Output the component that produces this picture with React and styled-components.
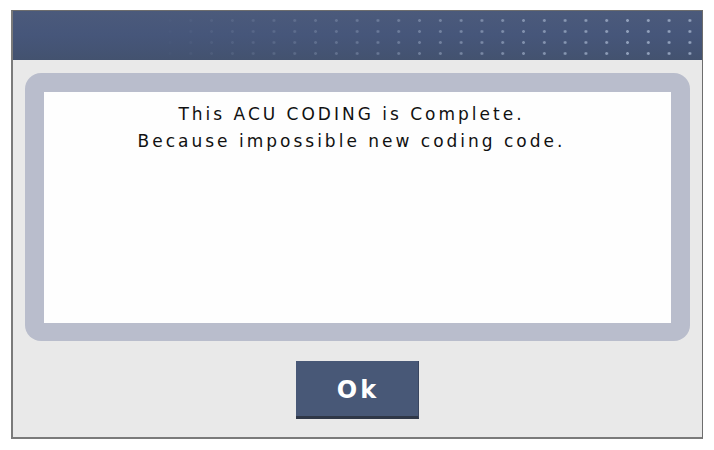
import React from "react";
import styled, { createGlobalStyle } from "styled-components";

const GlobalStyle = createGlobalStyle`
  html, body {
    margin: 0;
    padding: 0;
    background: #ffffff;
  }
`;

const Frame = styled.div`
  box-sizing: border-box;
  display: flex;
  flex-direction: column;
  width: 692px;
  height: 429px;
  margin: 10px 0 0 11px;
  background: #e9e9e9;
  border-top: 1px solid #6d6d6d;
  border-left: 2px solid #7a7a7a;
  border-right: 1px solid #6d6d6d;
  border-bottom: 2px solid #7a7a7a;
  font-family: "DejaVu Sans", "Liberation Sans", sans-serif;
`;

const Header = styled.div`
  position: relative;
  height: 49px;
  flex-shrink: 0;
  background: linear-gradient(180deg, #4b5a7b 0%, #46567a 50%, #43526f 100%);

  &::after {
    content: "";
    position: absolute;
    inset: 0;
    background-image: radial-gradient(
      circle,
      rgba(165, 180, 205, 0.8) 1px,
      transparent 1.8px
    );
    background-size: 20.8px 11px;
    background-position: 1px 4px;
    -webkit-mask-image: linear-gradient(90deg, transparent 20%, #000 90%);
    mask-image: linear-gradient(90deg, transparent 20%, #000 90%);
  }
`;

const Panel = styled.div`
  display: flex;
  margin: 13px 12px 0 12px;
  height: 268px;
  box-sizing: border-box;
  padding: 19px 19px 18px 19px;
  background: #b9bdcc;
  border-radius: 16px;
`;

const MessageBox = styled.div`
  flex: 1;
  background: #fefefe;
  padding: 9px 12px 0 0;
  text-align: center;
  font-size: 17px;
  line-height: 27px;
  letter-spacing: 3px;
  color: #111111;
`;

const Footer = styled.div`
  flex: 1;
  display: flex;
  justify-content: center;
  align-items: center;
  padding-right: 1px;
`;

const OkButton = styled.button`
  box-sizing: border-box;
  width: 123px;
  height: 58px;
  margin-top: 1px;
  padding: 4px 0 0 3px;
  border: none;
  border-right: 1px solid #3a4660;
  border-bottom: 3px solid #2f3747;
  background: #485877;
  color: #ffffff;
  font-family: "DejaVu Sans", "Liberation Sans", sans-serif;
  font-size: 24px;
  font-weight: bold;
  letter-spacing: 3px;
  cursor: pointer;
`;

const App = () => {
  return (
    <>
      <GlobalStyle />
      <Frame>
        <Header />
        <Panel>
          <MessageBox>
            This ACU CODING is Complete.
            <br />
            Because impossible new coding code.
          </MessageBox>
        </Panel>
        <Footer>
          <OkButton>Ok</OkButton>
        </Footer>
      </Frame>
    </>
  );
};

export default App;
